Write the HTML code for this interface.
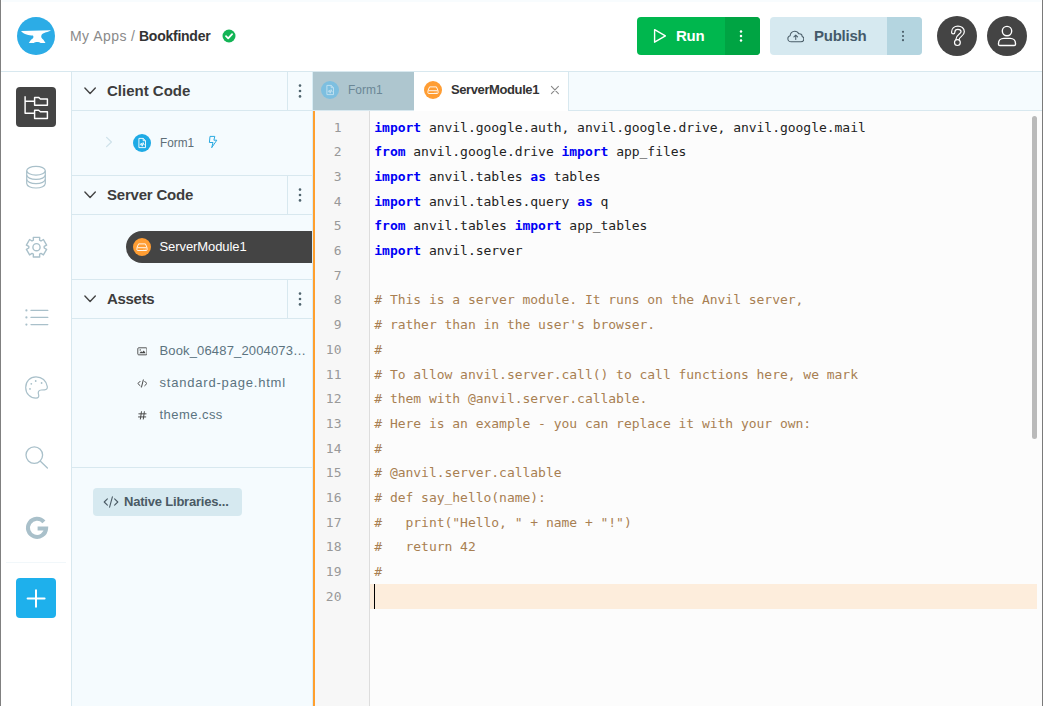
<!DOCTYPE html>
<html lang="en">
<head>
<meta charset="utf-8">
<title>Bookfinder - Anvil Editor</title>
<style>
*{box-sizing:border-box;margin:0;padding:0}
html,body{width:1043px;height:706px;overflow:hidden;background:#fff}
body{position:relative;font-family:"Liberation Sans",sans-serif;color:#444;}
.abs{position:absolute}
#edgeL{left:0;top:0;width:1px;height:706px;background:#808080}
#edgeR{left:1042px;top:0;width:1px;height:706px;background:#7a7a7a}
#topstripe{left:2px;top:0;width:1039px;height:2px;background:#f8fcfe}
/* header */
#header{left:0;top:0;width:1043px;height:72px;border-bottom:1px solid #d8e8ef}
#logo{left:17px;top:17px;width:38px;height:38px;border-radius:50%;background:#2cace6}
.crumb{top:26px;height:20px;line-height:20px;font-size:14px;white-space:nowrap}
#btnRun{left:637px;top:17px;width:123px;height:38px;border-radius:4px;background:#00b74e;overflow:hidden}
#btnRun .more{left:88px;top:0;width:35px;height:38px;background:#00a443}
#btnPub{left:770px;top:17px;width:152px;height:38px;border-radius:4px;background:#d6e9f0;overflow:hidden}
#btnPub .more{left:117px;top:0;width:35px;height:38px;background:#b4d5e0}
.btxt{top:9px;height:20px;line-height:20px;font-size:15px;font-weight:bold;white-space:nowrap}
.circ{top:16px;width:40px;height:40px;border-radius:50%;background:#444}
/* icon bar */
#iconbar{left:0;top:72px;width:72px;height:634px;background:#fff;border-right:1px solid #d8e8ef}
#iconbar .act{left:16px;top:15px;width:40px;height:40px;border-radius:4px;background:#444}
#iconbar .plus{left:16px;top:506px;width:40px;height:40px;border-radius:4px;background:#1eb0ec}
/* sidebar */
#side{left:72px;top:72px;width:241px;height:634px;background:#f5fbfe;border-right:1px solid #d9edf5}
.sech{left:0;width:240px;height:39px;border-bottom:1px solid #d8e8ef}
.sech .ttl{left:35px;top:9px;height:20px;line-height:20px;font-size:15px;font-weight:bold;color:#3d3d3d;white-space:nowrap}
.sech .kb{left:215px;top:0;width:25px;height:38px;border-left:1px solid #d8e8ef}
.item{font-size:13px;line-height:20px;height:20px;color:#5b7380;white-space:nowrap}
/* tabs */
#tabs{left:313px;top:72px;width:729px;height:39px;background:#f5fbfe;border-bottom:1px solid #d8e8ef}
#tab1{left:0;top:0;width:101px;height:38px;background:#aec6cf}
#tab2{left:101px;top:0;width:155px;height:39px;background:#fff;border-right:1px solid #d8e8ef}
/* editor */
#ed{left:313px;top:111px;width:729px;height:595px;background:#fcfcfc;border-left:2px solid #ff9f2e;overflow:hidden}
#gutter{left:0;top:0;width:55px;height:595px;background:#f7f7f7;border-right:1px solid #dddddd}
.ln{left:0;width:26.5px;text-align:right;font-family:"DejaVu Sans Mono","Liberation Mono",monospace;font-size:13px;color:#999;height:24.7px;line-height:24.7px}
.cl{left:59.3px;font-family:"DejaVu Sans Mono","Liberation Mono",monospace;font-size:13px;height:24.7px;line-height:24.7px;white-space:pre;color:#222;letter-spacing:-0.026px}
.kw{color:#0000f5;font-weight:bold}
.cm{color:#a87f52}
#curline{left:55px;top:473px;width:667px;height:24.7px;background:#fdeddc}
#thumb{left:717px;top:5px;width:5px;height:323px;border-radius:2.5px;background:#bababa}
</style>
</head>
<body>
<div id="header" class="abs">
  <div id="logo" class="abs"><svg width="38" height="38" viewBox="0 0 38 38"><path fill="#fff" d="M4 13.9 L34 13.2 C31 15.4 26.8 15 24.8 17.6 C23.6 19.6 24.2 21.4 26.4 22.7 L28.5 26 L23.6 26 C22 24.7 18.4 24.7 16.8 26 L11.8 26 L14 22.8 C16.4 21.6 17 20 16 18.5 C12 18 7 17.6 4 13.9 Z"/></svg></div>
  <div class="abs crumb" style="left:70px;color:#8a8a8a;letter-spacing:0.45px">My Apps</div>
  <div class="abs crumb" style="left:131px;color:#8a8a8a">/</div>
  <div class="abs crumb" style="left:139px;color:#333;font-weight:bold;letter-spacing:-0.25px">Bookfinder</div>
  <svg class="abs" style="left:222px;top:29px" width="14" height="14" viewBox="0 0 14 14"><circle cx="7" cy="7" r="6.5" fill="#13b455"/><path d="M4 7.2 L6.2 9.3 L10.1 5.1" fill="none" stroke="#fff" stroke-width="1.8" stroke-linecap="round" stroke-linejoin="round"/></svg>
  <div id="btnRun" class="abs">
    <div class="abs more"></div>
    <svg class="abs" style="left:15px;top:10px" width="16" height="18" viewBox="0 0 16 18"><path d="M2.6 2.6 L13.4 8.9 L2.6 15.2 Z" fill="none" stroke="#fff" stroke-width="1.4" stroke-linejoin="round"/></svg>
    <div class="abs btxt" style="left:39px;color:#fff;letter-spacing:-0.3px">Run</div>
    <svg class="abs" style="left:101px;top:12px" width="6" height="14" viewBox="0 0 6 14"><circle cx="3" cy="2.6" r="1.25" fill="#fff"/><circle cx="3" cy="7" r="1.25" fill="#fff"/><circle cx="3" cy="11.4" r="1.25" fill="#fff"/></svg>
  </div>
  <div id="btnPub" class="abs">
    <div class="abs more"></div>
    <svg class="abs" style="left:16.7px;top:12.5px" width="17.7" height="13" viewBox="0 0 19 14"><path d="M4.6 12.6 C2.4 12.6 0.9 11.2 0.9 9.3 C0.9 7.7 2 6.5 3.4 6.2 C3.4 3.6 5.4 1.3 8.2 1.3 C10.2 1.3 11.8 2.3 12.6 4 C14.6 3.6 16.3 5 16.3 6.9 C17.4 7.3 18.1 8.4 18.1 9.6 C18.1 11.3 16.8 12.6 15 12.6 Z" fill="none" stroke="#4a5d68" stroke-width="1.1" stroke-linejoin="round"/><path d="M9.4 10.2 L9.4 5.6 M7.4 7.5 L9.4 5.5 L11.4 7.5" fill="none" stroke="#4a5d68" stroke-width="1.1" stroke-linecap="round" stroke-linejoin="round"/></svg>
    <div class="abs btxt" style="left:44px;color:#44596a;letter-spacing:-0.25px">Publish</div>
    <svg class="abs" style="left:130px;top:12px" width="6" height="14" viewBox="0 0 6 14"><circle cx="3" cy="2.8" r="1.1" fill="#4a5d68"/><circle cx="3" cy="7" r="1.1" fill="#4a5d68"/><circle cx="3" cy="11.2" r="1.1" fill="#4a5d68"/></svg>
  </div>
  <div class="abs circ" style="left:937px"><svg width="40" height="40" viewBox="0 0 40 40" fill="none" stroke-linecap="round" stroke-linejoin="round"><path d="M16.2 16.2 C16.2 13.4 18.2 11.7 20.9 11.7 C23.7 11.7 25.7 13.4 25.7 15.7 C25.7 19.2 20.5 19.6 20.5 23.6" stroke="#fff" stroke-width="4.5"/><path d="M16.2 16.2 C16.2 13.4 18.2 11.7 20.9 11.7 C23.7 11.7 25.7 13.4 25.7 15.7 C25.7 19.2 20.5 19.6 20.5 23.6" stroke="#444" stroke-width="2.1"/><circle cx="20.4" cy="26.6" r="2.9" fill="#444" stroke="#fff" stroke-width="1.2"/></svg></div>
  <div class="abs circ" style="left:987px"><svg width="40" height="40" viewBox="0 0 40 40"><circle cx="20" cy="15.1" r="4.7" fill="none" stroke="#fff" stroke-width="1.4"/><path d="M11.5 28.2 V27.4 C11.5 24.4 13.8 22.4 16.8 22.4 H23.2 C26.2 22.4 28.5 24.4 28.5 27.4 V28.2 Q28.5 29.5 27.2 29.5 H12.8 Q11.5 29.5 11.5 28.2 Z" fill="none" stroke="#fff" stroke-width="1.4" stroke-linejoin="round"/></svg></div>
</div>
<div id="topstripe" class="abs"></div>
<div id="iconbar" class="abs">
  <div class="abs act"><svg width="40" height="40" viewBox="0 0 40 40" fill="none" stroke="#fff" stroke-width="1.45" stroke-linejoin="round"><path d="M9.1 9.2 V26.3 H18.5 M9.1 14.3 H18.5"/><path d="M18.6 10.4 H22.6 L24.4 12 H31.4 V18.3 H18.6 Z"/><path d="M18.6 23.2 H22.6 L24.4 24.8 H31.4 V31.4 H18.6 Z"/></svg></div>
  <svg class="abs" style="left:16px;top:85px" width="40" height="40" viewBox="0 0 40 40" fill="none" stroke="#a9c0ca" stroke-width="1.2"><ellipse cx="20" cy="13.7" rx="9.3" ry="4.4"/><path d="M10.7 13.7 V26.6 C10.7 29 14.9 31 20 31 C25.1 31 29.3 29 29.3 26.6 V13.7"/><path d="M10.7 18 C10.7 20.4 14.9 22.4 20 22.4 C25.1 22.4 29.3 20.4 29.3 18"/><path d="M10.7 22.3 C10.7 24.7 14.9 26.7 20 26.7 C25.1 26.7 29.3 24.7 29.3 22.3"/></svg>
  <svg class="abs" style="left:16px;top:155px" width="40" height="40" viewBox="0 0 40 40" fill="none" stroke="#a9c0ca" stroke-width="1.4" stroke-linejoin="round"><circle cx="20.5" cy="20.2" r="3.6"/><path d="M17.4 13.2 L17.3 10.4 L23.7 10.4 L23.6 13.2 L25.0 14.0 L27.4 12.5 L30.6 18.1 L28.2 19.4 L28.2 21.0 L30.6 22.3 L27.4 27.9 L25.0 26.4 L23.6 27.2 L23.7 30.0 L17.3 30.0 L17.4 27.2 L16.0 26.4 L13.6 27.9 L10.4 22.3 L12.8 21.0 L12.8 19.4 L10.4 18.1 L13.6 12.5 L16.0 14.0 Z"/></svg>
  <svg class="abs" style="left:16px;top:225px" width="40" height="40" viewBox="0 0 40 40" fill="none" stroke="#a9c0ca" stroke-width="1.3" stroke-linecap="round"><path d="M15 13.4 H31.8 M15 20.4 H31.8 M15 27.6 H31.8"/><circle cx="10.4" cy="13.4" r="1.1" fill="#a9c0ca" stroke="none"/><circle cx="10.4" cy="20.4" r="1.1" fill="#a9c0ca" stroke="none"/><circle cx="10.4" cy="27.6" r="1.1" fill="#a9c0ca" stroke="none"/></svg>
  <svg class="abs" style="left:16px;top:295px" width="40" height="40" viewBox="0 0 40 40" fill="none" stroke="#a9c0ca" stroke-width="1.2" stroke-linejoin="round"><path d="M20 9.8 C14 9.8 9.7 14.6 9.7 20.4 C9.7 26.6 14.4 31.2 20 31.2 C22.4 31.2 23.2 29.6 22.6 27.8 C21.8 25.4 22.2 23.2 25.4 23 L28.6 22.9 C30.6 22.8 31.6 21.6 31.3 19.6 C30.4 13.8 26 9.8 20 9.8 Z"/><circle cx="19.7" cy="14" r="0.9" fill="#a9c0ca" stroke="none"/><circle cx="15.3" cy="16.8" r="0.9" fill="#a9c0ca" stroke="none"/><circle cx="25.6" cy="16" r="0.9" fill="#a9c0ca" stroke="none"/><circle cx="14" cy="21.9" r="0.9" fill="#a9c0ca" stroke="none"/></svg>
  <svg class="abs" style="left:16px;top:365px" width="40" height="40" viewBox="0 0 40 40" fill="none" stroke="#a9c0ca" stroke-width="1.3" stroke-linecap="round"><circle cx="18.3" cy="18.1" r="8.3"/><path d="M24.4 24.2 L31.4 31"/></svg>
  <svg class="abs" style="left:17px;top:435.8px" width="40" height="40" viewBox="0 0 40 40"><path d="M26.9 13.9 A9.1 9.1 0 1 0 29.1 20.5 H20.6" fill="none" stroke="#a9c0ca" stroke-width="4" stroke-linejoin="miter"/></svg>
  <div class="abs" style="left:6px;top:490px;width:60px;height:1px;background:#f1f7fa"></div>
  <div class="abs plus"><svg width="40" height="40" viewBox="0 0 40 40" stroke="#fff" stroke-width="2" stroke-linecap="round"><path d="M11.6 20.5 H28.6 M20 12.2 V28.8"/></svg></div>
</div>
<div id="side" class="abs">
  <div class="abs sech" style="top:0px;"><svg class="abs" style="left:11px;top:14px" width="14" height="10" viewBox="0 0 14 10" fill="none" stroke="#444" stroke-width="1.4" stroke-linecap="round" stroke-linejoin="round"><path d="M1.9 2 L7.1 7.4 L12.3 2"/></svg><div class="abs ttl">Client Code</div><div class="abs kb"><svg class="abs" style="left:9px;top:11px" width="6" height="16" viewBox="0 0 6 16"><circle cx="3" cy="2.6" r="1.3" fill="#51656f"/><circle cx="3" cy="8" r="1.3" fill="#51656f"/><circle cx="3" cy="13.4" r="1.3" fill="#51656f"/></svg></div></div>
  <svg class="abs" style="left:33px;top:64px" width="8" height="12" viewBox="0 0 8 12" fill="none" stroke="#cfe2ea" stroke-width="1.3" stroke-linecap="round" stroke-linejoin="round"><path d="M1.6 1.4 L6.4 6 L1.6 10.6"/></svg>
  <div class="abs" style="left:61px;top:62px;width:18px;height:18px;border-radius:50%;background:#1eaae5"><svg width="18" height="18" viewBox="0 0 18 18" fill="none" stroke="#fff" stroke-width="0.9" stroke-linejoin="round"><path d="M5.9 4.4 H10.2 L12.5 6.7 V13.6 H5.9 Z M10.2 4.4 V6.7 H12.5"/><path d="M6.9 10.8 H7.6 L8.3 9.2 L9.2 12.2 L10.1 8.6 L10.9 10.8 H11.5" stroke-width="0.9"/></svg></div>
  <div class="abs item" style="left:87.9px;top:61px;color:#5e6e77;transform:scaleX(0.905);transform-origin:0 0">Form1</div>
  <svg class="abs" style="left:136px;top:63px" width="10" height="14" viewBox="0 0 10 14" fill="none" stroke="#2aa9e0" stroke-width="1" stroke-linejoin="round"><path d="M2 1.4 H6.8 L5.9 5.2 H8.8 L3.7 12.7 L5 7.5 H1.4 Z"/></svg>
  <div class="abs sech" style="top:103px;border-top:1px solid #d8e8ef;height:40px;"><svg class="abs" style="left:11px;top:14px" width="14" height="10" viewBox="0 0 14 10" fill="none" stroke="#444" stroke-width="1.4" stroke-linecap="round" stroke-linejoin="round"><path d="M1.9 2 L7.1 7.4 L12.3 2"/></svg><div class="abs ttl" style="letter-spacing:-0.2px">Server Code</div><div class="abs kb"><svg class="abs" style="left:9px;top:11px" width="6" height="16" viewBox="0 0 6 16"><circle cx="3" cy="2.6" r="1.3" fill="#51656f"/><circle cx="3" cy="8" r="1.3" fill="#51656f"/><circle cx="3" cy="13.4" r="1.3" fill="#51656f"/></svg></div></div>
  <div class="abs" style="left:54px;top:159px;width:186px;height:32px;border-radius:16px 0 0 16px;background:#444"></div>
  <div class="abs" style="left:61px;top:166px;width:18px;height:18px;border-radius:50%;background:#ff9d33"><svg width="18" height="18" viewBox="0 0 18 18" fill="none" stroke="#fff" stroke-width="0.9" stroke-linejoin="round"><path d="M3.9 9.7 L5.6 5.9 H12.4 L14.1 9.7"/><rect x="3.9" y="9.7" width="10.2" height="2.8" rx="0.8"/><circle cx="11" cy="11.1" r="0.45" fill="#fff" stroke="none"/><circle cx="12.5" cy="11.1" r="0.45" fill="#fff" stroke="none"/></svg></div>
  <div class="abs item" style="left:87.5px;top:165px;color:#fff;letter-spacing:-0.08px">ServerModule1</div>
  <div class="abs sech" style="top:207px;border-top:1px solid #d8e8ef;height:40px;"><svg class="abs" style="left:11px;top:14px" width="14" height="10" viewBox="0 0 14 10" fill="none" stroke="#444" stroke-width="1.4" stroke-linecap="round" stroke-linejoin="round"><path d="M1.9 2 L7.1 7.4 L12.3 2"/></svg><div class="abs ttl" style="letter-spacing:-0.3px">Assets</div><div class="abs kb"><svg class="abs" style="left:9px;top:11px" width="6" height="16" viewBox="0 0 6 16"><circle cx="3" cy="2.6" r="1.3" fill="#51656f"/><circle cx="3" cy="8" r="1.3" fill="#51656f"/><circle cx="3" cy="13.4" r="1.3" fill="#51656f"/></svg></div></div>
  <svg class="abs" style="left:64.6px;top:274.6px" width="10.8" height="9" viewBox="0 0 12 10" fill="none" stroke="#444" stroke-width="1"><rect x="0.9" y="0.9" width="10.2" height="7.8" rx="1"/><path d="M2.6 7 L4.6 4.6 L5.8 5.8 L7.6 3.8 L9.6 7 Z" fill="#444" stroke="none"/><circle cx="3.6" cy="3.2" r="0.8" fill="#444" stroke="none"/></svg>
  <div class="abs item" style="left:87.5px;top:269px;letter-spacing:0.15px">Book_06487_2004073…</div>
  <svg class="abs" style="left:64.6px;top:306.9px" width="10.8" height="9" viewBox="0 0 12 10" fill="none" stroke="#444" stroke-width="1.1" stroke-linecap="round" stroke-linejoin="round"><path d="M3.4 2.6 L1 5 L3.4 7.4 M8.6 2.6 L11 5 L8.6 7.4 M7 1 L5 9"/></svg>
  <div class="abs item" style="left:87.5px;top:301px;letter-spacing:0.8px">standard-page.html</div>
  <svg class="abs" style="left:66px;top:339px" width="8.6" height="8.6" viewBox="0 0 10 10" fill="none" stroke="#444" stroke-width="1.1" stroke-linecap="round"><path d="M1 3.3 H9.4 M0.6 6.9 H9 M4 0.8 L2.8 9.4 M7.4 0.8 L6.2 9.4"/></svg>
  <div class="abs item" style="left:87.5px;top:333px;letter-spacing:0.45px">theme.css</div>
  <div class="abs" style="left:0;top:395px;width:240px;height:1px;background:#d8e8ef"></div>
  <div class="abs" style="left:21px;top:416px;width:149px;height:28px;border-radius:4px;background:#d6e9f0">
    <svg class="abs" style="left:10px;top:8px" width="16" height="12" viewBox="0 0 16 12" fill="none" stroke="#4a5a64" stroke-width="1.1" stroke-linecap="round" stroke-linejoin="round"><path d="M4.4 2.8 L1.2 6 L4.4 9.2 M11.6 2.8 L14.8 6 L11.6 9.2 M9.4 0.8 L6.6 11.2"/></svg>
    <div class="abs" style="left:31px;top:4px;height:20px;line-height:20px;font-size:13px;font-weight:bold;color:#4a5a64;white-space:nowrap;letter-spacing:-0.2px">Native Libraries...</div>
  </div>
</div>
<div id="tabs" class="abs">
  <div id="tab1" class="abs">
    <div class="abs" style="left:8px;top:9px;width:18px;height:18px;border-radius:50%;background:#7dbfe0"><svg width="18" height="18" viewBox="0 0 18 18" fill="none" stroke="#c4e2f0" stroke-width="0.9" stroke-linejoin="round"><path d="M5.9 4.4 H10.2 L12.5 6.7 V13.6 H5.9 Z M10.2 4.4 V6.7 H12.5"/><path d="M6.9 10.8 H7.6 L8.3 9.2 L9.2 12.2 L10.1 8.6 L10.9 10.8 H11.5" stroke-width="0.9"/></svg></div>
    <div class="abs item" style="left:35.2px;top:8px;color:#6b8796;transform:scaleX(0.92);transform-origin:0 0">Form1</div>
  </div>
  <div id="tab2" class="abs">
    <div class="abs" style="left:10px;top:9px;width:18px;height:18px;border-radius:50%;background:#ff9d33"><svg width="18" height="18" viewBox="0 0 18 18" fill="none" stroke="#fff" stroke-width="0.9" stroke-linejoin="round"><path d="M3.9 9.7 L5.6 5.9 H12.4 L14.1 9.7"/><rect x="3.9" y="9.7" width="10.2" height="2.8" rx="0.8"/><circle cx="11" cy="11.1" r="0.45" fill="#fff" stroke="none"/><circle cx="12.5" cy="11.1" r="0.45" fill="#fff" stroke="none"/></svg></div>
    <div class="abs item" style="left:37px;top:8px;color:#333;font-weight:bold;letter-spacing:-0.4px">ServerModule1</div>
    <svg class="abs" style="left:136px;top:13px" width="10" height="10" viewBox="0 0 10 10" stroke="#888" stroke-width="1.1" stroke-linecap="round"><path d="M1.4 1.4 L8.4 8.6 M8.4 1.4 L1.4 8.6"/></svg>
  </div>
</div>
<div id="ed" class="abs">
  <div id="gutter" class="abs"></div>
  <div id="curline" class="abs"></div>
  <div class="abs" style="left:59px;top:473px;width:1.4px;height:24.7px;background:#000"></div>
  <div class="abs ln" style="top:4.5px">1</div><div class="abs cl" style="top:4.5px"><span class="kw">import</span> anvil.google.auth, anvil.google.drive, anvil.google.mail</div>
  <div class="abs ln" style="top:29.2px">2</div><div class="abs cl" style="top:29.2px"><span class="kw">from</span> anvil.google.drive <span class="kw">import</span> app_files</div>
  <div class="abs ln" style="top:53.9px">3</div><div class="abs cl" style="top:53.9px"><span class="kw">import</span> anvil.tables <span class="kw">as</span> tables</div>
  <div class="abs ln" style="top:78.6px">4</div><div class="abs cl" style="top:78.6px"><span class="kw">import</span> anvil.tables.query <span class="kw">as</span> q</div>
  <div class="abs ln" style="top:103.3px">5</div><div class="abs cl" style="top:103.3px"><span class="kw">from</span> anvil.tables <span class="kw">import</span> app_tables</div>
  <div class="abs ln" style="top:128.0px">6</div><div class="abs cl" style="top:128.0px"><span class="kw">import</span> anvil.server</div>
  <div class="abs ln" style="top:152.7px">7</div><div class="abs cl" style="top:152.7px"></div>
  <div class="abs ln" style="top:177.4px">8</div><div class="abs cl" style="top:177.4px"><span class="cm"># This is a server module. It runs on the Anvil server,</span></div>
  <div class="abs ln" style="top:202.1px">9</div><div class="abs cl" style="top:202.1px"><span class="cm"># rather than in the user's browser.</span></div>
  <div class="abs ln" style="top:226.8px">10</div><div class="abs cl" style="top:226.8px"><span class="cm">#</span></div>
  <div class="abs ln" style="top:251.5px">11</div><div class="abs cl" style="top:251.5px"><span class="cm"># To allow anvil.server.call() to call functions here, we mark</span></div>
  <div class="abs ln" style="top:276.2px">12</div><div class="abs cl" style="top:276.2px"><span class="cm"># them with @anvil.server.callable.</span></div>
  <div class="abs ln" style="top:300.9px">13</div><div class="abs cl" style="top:300.9px"><span class="cm"># Here is an example - you can replace it with your own:</span></div>
  <div class="abs ln" style="top:325.6px">14</div><div class="abs cl" style="top:325.6px"><span class="cm">#</span></div>
  <div class="abs ln" style="top:350.3px">15</div><div class="abs cl" style="top:350.3px"><span class="cm"># @anvil.server.callable</span></div>
  <div class="abs ln" style="top:375.0px">16</div><div class="abs cl" style="top:375.0px"><span class="cm"># def say_hello(name):</span></div>
  <div class="abs ln" style="top:399.7px">17</div><div class="abs cl" style="top:399.7px"><span class="cm">#   print("Hello, " + name + "!")</span></div>
  <div class="abs ln" style="top:424.4px">18</div><div class="abs cl" style="top:424.4px"><span class="cm">#   return 42</span></div>
  <div class="abs ln" style="top:449.1px">19</div><div class="abs cl" style="top:449.1px"><span class="cm">#</span></div>
  <div class="abs ln" style="top:473.8px">20</div><div class="abs cl" style="top:473.8px"></div>
  <div id="thumb" class="abs"></div>
</div>
<div id="edgeL" class="abs"></div>
<div id="edgeR" class="abs"></div>
</body>
</html>
